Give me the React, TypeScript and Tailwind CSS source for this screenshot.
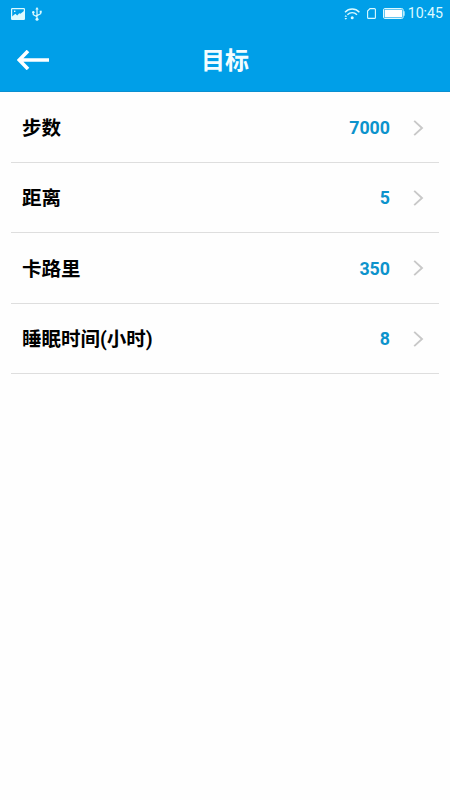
import { useState } from "react";

interface Goal {
  id: string;
  label: string;
  value: number;
}

const goals: Goal[] = [
  { id: "steps", label: "步数", value: 7000 },
  { id: "distance", label: "距离", value: 5 },
  { id: "calories", label: "卡路里", value: 350 },
  { id: "sleep", label: "睡眠时间(小时)", value: 8 },
];

function StatusBar() {
  return (
    <div className="flex h-[27px] items-center justify-between pl-[11px] pr-[7px] text-[#dcfaff]">
      <div className="flex items-center gap-[7px]">
        <svg className="h-3 w-[14px]" viewBox="0 0 14 12" fill="none">
          <rect x="0.6" y="0.6" width="12.8" height="10.8" rx="0.6" stroke="currentColor" strokeWidth="1.2" />
          <path d="M1 11V8.6L4.4 5.8l1.8 1.6 2-2.2 1.2 0.6L13 3v8z" fill="currentColor" />
          <rect x="3" y="2.6" width="1.4" height="1.4" fill="currentColor" />
        </svg>
        <svg className="h-[14px] w-[10px]" viewBox="0 0 10 14" fill="none" stroke="currentColor" strokeWidth="1.2">
          <path d="M5 1.5V12M1.3 5.5v2.2L5 9.6M8.7 4.5v2.2L5 8.6" />
          <path d="M5 0L3.3 2.6h3.4z" fill="currentColor" stroke="none" />
          <circle cx="5" cy="12.3" r="1.5" fill="currentColor" stroke="none" />
          <circle cx="1.3" cy="5.2" r="1.2" fill="currentColor" stroke="none" />
          <path d="M7.7 3.7h2v2h-2z" fill="currentColor" stroke="none" />
        </svg>
      </div>
      <div className="flex items-center">
        <svg className="h-3 w-4" viewBox="0 0 16 12" fill="none" stroke="currentColor" strokeWidth="1.4">
          <path d="M1 4.2C5 0 11.4 0 15.4 4.2M3.4 6.7c2.8-2.8 6.8-2.8 9.6 0" />
          <circle cx="8.2" cy="9.8" r="1.5" fill="currentColor" stroke="none" />
          <path d="M0.5 8.8L1.8 7l1.3 1.8zM0.5 10L1.8 11.8 3.1 10z" fill="currentColor" stroke="none" />
        </svg>
        <svg className="ml-[7px] h-[11px] w-[9px]" viewBox="0 0 9 11" fill="none" stroke="currentColor" strokeWidth="1.1">
          <path d="M3 0.6h4.4a1 1 0 0 1 1 1v7.8a1 1 0 0 1-1 1H1.6a1 1 0 0 1-1-1V3z" />
        </svg>
        <svg className="ml-[7px] h-[11px] w-[22px]" viewBox="0 0 22 11" fill="none">
          <rect x="0.5" y="0.5" width="19.6" height="10" rx="1.4" stroke="currentColor" />
          <rect x="1.6" y="1.6" width="17.4" height="7.8" fill="white" />
          <path d="M20.3 3.2h1.3v4.6h-1.3z" fill="currentColor" />
        </svg>
        <span className="ml-[3px] text-[14.2px] leading-[15px]">10:45</span>
      </div>
    </div>
  );
}

function GoalRow({ goal, active, onSelect }: { goal: Goal; active: boolean; onSelect: () => void }) {
  return (
    <li>
      <button
        type="button"
        aria-pressed={active}
        onClick={onSelect}
        className="flex h-[70.4px] w-full items-center border-b border-[#dedede] pl-[11px] pr-[15px] pt-px"
      >
        <span className="pt-[2px] text-[19.5px] font-bold text-black">{goal.label}</span>
        <span className="ml-auto pt-[1.5px] text-[17.8px] font-bold text-[#0c93cc]">{goal.value}</span>
        <svg className="ml-[23px] h-4 w-[11px]" viewBox="0 0 11 16" fill="none" stroke="#c8c8c8" strokeWidth="1.9">
          <path d="M1.2 0.9L9 8l-7.8 7.1" />
        </svg>
      </button>
    </li>
  );
}

export default function App() {
  const [selected, setSelected] = useState<string | null>(null);

  return (
    <div className="min-h-screen bg-[#fefefe] font-[Roboto,'Noto_Sans_CJK_SC',sans-serif]">
      <header className="h-[92px] border-b border-[#0b8fd0] bg-[#009fe8]">
        <StatusBar />
        <div className="grid h-[65px] grid-cols-[1fr_auto_1fr] items-center px-[17px]">
          <button type="button" aria-label="返回" className="w-8">
            <svg className="h-5 w-8" viewBox="0 0 32 20" fill="none" stroke="white" strokeWidth="3.6">
              <path d="M2 10h30M11 1L2.2 10l8.8 9" />
            </svg>
          </button>
          <h1 className="pt-[3px] text-[24px] font-bold leading-none text-[#f4fdff]">目标</h1>
        </div>
      </header>

      <ul className="px-[11px] pt-[0.5px]">
        {goals.map((goal) => (
          <GoalRow key={goal.id} goal={goal} active={selected === goal.id} onSelect={() => setSelected(goal.id)} />
        ))}
      </ul>
    </div>
  );
}
